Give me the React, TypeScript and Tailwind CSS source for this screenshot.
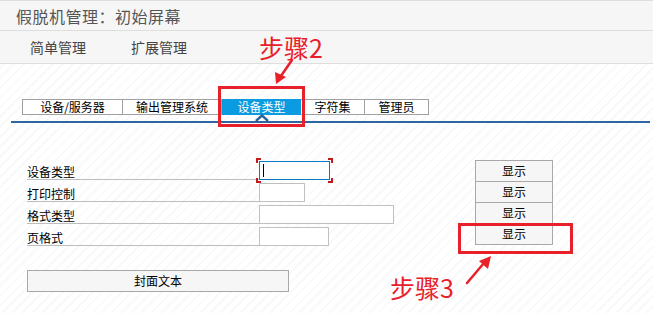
import { ReactNode } from 'react';

const font = { fontFamily: '"Noto Sans CJK SC", "Liberation Sans", sans-serif' };

interface TabProps {
  label: string;
  width: string;
  active?: boolean;
}

function Tab({ label, width, active }: TabProps) {
  if (active) {
    return (
      <div className={`relative ${width} h-[16px] bg-[#0b9be0] text-white flex items-center justify-center text-[12px] leading-none`}>
        {label}
        <svg className="absolute left-1/2 -translate-x-1/2 top-[15px]" width="14" height="8" viewBox="0 0 14 8">
          <path d="M1 7 L7 1.5 L13 7" fill="none" stroke="#2b5f95" strokeWidth="2.4" />
          <path d="M3 7 L7 3.5 L11 7 Z" fill="#ffffff" />
        </svg>
      </div>
    );
  }
  return (
    <div className={`${width} h-[16px] border border-[#a0a0a0] -ml-px first:ml-0 bg-white flex items-center justify-center text-[12px] leading-none text-black`}>
      {label}
    </div>
  );
}

function FieldRow({ label, children }: { label: string; children: ReactNode }) {
  return (
    <div className="flex items-end h-[22px]">
      <div className="w-[232px] h-[22px] border-b border-[#bdbdbd] flex items-end pb-[1px] text-[12px] text-black leading-none">
        {label}
      </div>
      {children}
    </div>
  );
}

function ShowButton() {
  return (
    <div className="w-[78px] h-[22px] border border-[#a8a8a8] bg-[#f6f6f6] flex items-center justify-center text-[12px] text-black leading-none -mt-px first:mt-0">
      显示
    </div>
  );
}

export default function App() {
  return (
    <div style={font} className="relative w-[653px] h-[313px] overflow-hidden bg-[repeating-linear-gradient(135deg,#ffffff_0px,#ffffff_5px,#f7f9fb_5px,#f7f9fb_7px)]">
      <div className="h-[31px] bg-[#f6f6f6] border-t border-b border-[#dedede] flex items-center pl-[16px] text-[16px] text-[#555] tracking-[0.5px]">
        假脱机管理：初始屏幕
      </div>
      <div className="h-[33px] bg-[#f6f6f6] border-b border-[#dedede] flex items-center text-[14px] text-[#444]">
        <span className="ml-[30px]">简单管理</span>
        <span className="ml-[45px]">扩展管理</span>
      </div>

      <div className="pt-[35px] pl-[22px] flex">
        <Tab label="设备/服务器" width="w-[101px]" />
        <Tab label="输出管理系统" width="w-[100px]" />
        <Tab label="设备类型" width="w-[79px]" active />
        <Tab label="字符集" width="w-[65px]" />
        <Tab label="管理员" width="w-[65px]" />
      </div>
      <div className="ml-[11px] mr-[3px] mt-[6px] h-[2px] bg-[#2d66a0]" />

      <div className="flex pl-[27px] pt-[35px]">
        <div className="w-[448px] flex flex-col">
          <FieldRow label="设备类型">
            <div className="relative w-[71px] h-[19px] border border-[#0a78c2] bg-white">
              <div className="absolute left-[3px] top-[2px] w-px h-[13px] bg-black" />
              <div className="absolute -left-[4px] -top-[4px] w-[5px] h-[5px] border-l-2 border-t-2 border-[#c01a1a]" />
              <div className="absolute -right-[4px] -top-[4px] w-[5px] h-[5px] border-r-2 border-t-2 border-[#c01a1a]" />
              <div className="absolute -left-[4px] -bottom-[4px] w-[5px] h-[5px] border-l-2 border-b-2 border-[#c01a1a]" />
              <div className="absolute -right-[4px] -bottom-[4px] w-[5px] h-[5px] border-r-2 border-b-2 border-[#c01a1a]" />
            </div>
          </FieldRow>
          <FieldRow label="打印控制">
            <div className="w-[46px] h-[19px] border border-[#c0c0c0] bg-white" />
          </FieldRow>
          <FieldRow label="格式类型">
            <div className="w-[135px] h-[19px] border border-[#c0c0c0] bg-white" />
          </FieldRow>
          <FieldRow label="页格式">
            <div className="w-[70px] h-[19px] border border-[#c0c0c0] bg-white" />
          </FieldRow>

          <div className="mt-[24px] w-[262px] h-[22px] border border-[#a8a8a8] bg-[#f6f6f6] flex items-center justify-center text-[12px] text-black leading-none">
            封面文本
          </div>
        </div>
        <div className="flex flex-col pt-[2px]">
          <ShowButton />
          <ShowButton />
          <ShowButton />
          <ShowButton />
        </div>
      </div>

      {/* annotations */}
      <div className="absolute left-[218px] top-[86px] w-[87px] h-[41px] border-[3px] border-[#e8202a]" />
      <div className="absolute left-[458px] top-[223px] w-[115px] h-[31px] border-[3px] border-[#e8202a]" />
      <div className="absolute left-[259px] top-[35px] text-[25px] leading-none text-[#e8202a]">步骤2</div>
      <div className="absolute left-[390px] top-[275px] text-[25px] leading-none text-[#e8202a]">步骤3</div>
      <svg className="absolute left-0 top-0 pointer-events-none" width="653" height="313" viewBox="0 0 653 313">
        <path d="M292 60 L281 76" stroke="#e8202a" strokeWidth="2.5" strokeLinecap="round" />
        <path d="M276 84 L275 72 L286 77 Z" fill="#e8202a" />
        <path d="M467 283 L484 263" stroke="#e8202a" strokeWidth="2.5" strokeLinecap="round" />
        <path d="M491 256 L488 269 L479 261 Z" fill="#e8202a" />
      </svg>
    </div>
  );
}
